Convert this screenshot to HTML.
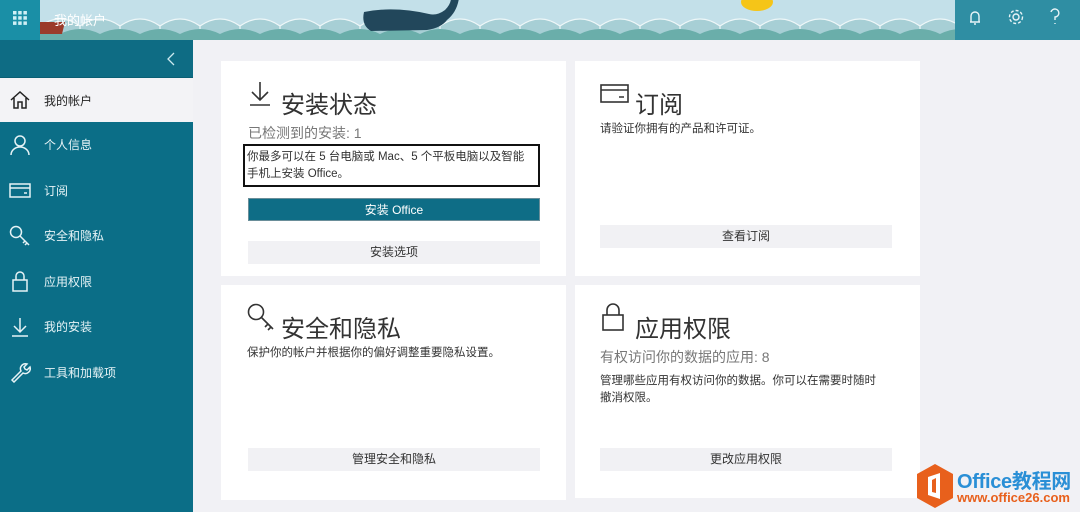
<!DOCTYPE html>
<html><head><meta charset="utf-8"><style>
*{margin:0;padding:0;box-sizing:border-box}
body{width:1080px;height:512px;overflow:hidden;background:#f1f1f5;font-family:"Liberation Sans","Noto Sans CJK SC",sans-serif;position:relative;color:#333}
.hdr{position:absolute;left:0;top:0;width:1080px;height:40px;background:#c3e0e9;overflow:hidden}
.waf{position:absolute;left:0;top:0;width:40px;height:40px;background:#1a8fa6}
.right{position:absolute;left:955px;top:0;width:125px;height:40px;background:#2f8ea3}
.side{position:absolute;left:0;top:40px;width:193px;height:472px;background:#0b6e87}
.topb{height:38px;background:#0e6c84;border-bottom:1px solid #0a5f74;position:relative}
.item{height:45.5px;display:flex;align-items:center;font-size:12px;color:#e6f3f6}
.item.sel{background:#f3f3f6;color:#222}
.item svg{margin-left:9px;width:22px;height:22px;margin-right:13px}
.card{position:absolute;background:#fff;width:345px;height:215px}
.t{position:absolute;left:60px;font-size:24px;color:#333}
.btn{position:absolute;left:27px;width:292px;height:23px;background:#f1f1f4;font-size:12px;text-align:center;line-height:23px;color:#333}
.p{position:absolute;left:26px;font-size:11.5px;line-height:17px;color:#333}
.sub{position:absolute;left:27px;font-size:14px;color:#777}
</style></head><body>
<div class="hdr">
<svg width="1080" height="40" style="position:absolute;left:0;top:0">
<defs><pattern id="w" x="0" y="0" width="40" height="40" patternUnits="userSpaceOnUse">
<path d="M0 26 q20 -14 40 0 V40 H0Z" fill="#a7cfd5" stroke="#eef7f8" stroke-width="1.2"/>
<path d="M-20 34 q20 -10 40 0 q20 -10 40 0 V40 H-20Z" fill="#6aaeaa"/>
</pattern></defs>
<rect x="40" y="0" width="1040" height="40" fill="url(#w)"/>
<path d="M364 12 q30-6 65 2 q8 2 16 -4 q6 -6 6 -12 l8 0 q-2 14 -12 22 q-6 8 -20 10 l-56 1 q-10-6 -7-19z" fill="#22475b"/>
<path d="M40 22 l25 0 l-3 12 l-22 0z" fill="#9b3b2a"/>
<ellipse cx="757" cy="2" rx="16" ry="9" fill="#f5c518"/>
</svg>
<div class="waf"><svg width="40" height="40"><g fill="#cfeff5"><rect x="13" y="11" width="3.5" height="3.5"/><rect x="18.2" y="11" width="3.5" height="3.5"/><rect x="23.4" y="11" width="3.5" height="3.5"/><rect x="13" y="16.2" width="3.5" height="3.5"/><rect x="18.2" y="16.2" width="3.5" height="3.5"/><rect x="23.4" y="16.2" width="3.5" height="3.5"/><rect x="13" y="21.4" width="3.5" height="3.5"/><rect x="18.2" y="21.4" width="3.5" height="3.5"/><rect x="23.4" y="21.4" width="3.5" height="3.5"/></g></svg></div>
<div style="position:absolute;left:54px;top:10px;font-size:13px;color:#fff">我的帐户</div>
<div class="right"><svg width="125" height="40" fill="none" stroke="#e8f4f7" stroke-width="1.4">
<path d="M16 22 v-6 a4 4 0 0 1 8 0 v6 h1 h-10z M19 24 h2"/>
<circle cx="61" cy="17" r="3"/><circle cx="61" cy="17" r="6.5" stroke-dasharray="3 2"/>
<path d="M96 12 a4 4 0 1 1 4 5 v3 M100 23 v1"/></svg></div>
</div>
<div class="side">
<div class="topb"><svg style="position:absolute;left:166px;top:12px" width="12" height="14"><path d="M8 1 L2 7 L8 13" stroke="#cbe9ef" stroke-width="1.3" fill="none"/></svg></div>
<div class="item sel" style="height:44px"><svg viewBox="0 0 22 22" fill="none" stroke="#222" stroke-width="1.5"><path d="M2 11 L11 3 L20 11 M5 9 V19 H9 V13 H13 V19 H17 V9"/></svg>我的帐户</div>
<div class="item"><svg viewBox="0 0 22 22" fill="none" stroke="#e6f3f6" stroke-width="1.5"><circle cx="11" cy="7" r="5"/><path d="M2 21 a9 8 0 0 1 18 0"/></svg>个人信息</div>
<div class="item"><svg viewBox="0 0 22 22" fill="none" stroke="#e6f3f6" stroke-width="1.5"><rect x="1" y="5" width="20" height="13"/><path d="M1 9 H21 M15 14 h3"/></svg>订阅</div>
<div class="item"><svg viewBox="0 0 22 22" fill="none" stroke="#e6f3f6" stroke-width="1.5"><circle cx="7" cy="7" r="5.5"/><path d="M11 11 L20 20 M16 16 l-2 2 M18 18 l-2 2"/></svg>安全和隐私</div>
<div class="item"><svg viewBox="0 0 22 22" fill="none" stroke="#e6f3f6" stroke-width="1.5"><rect x="4" y="10" width="14" height="11"/><path d="M7 10 V6 a4 4 0 0 1 8 0 V10"/></svg>应用权限</div>
<div class="item"><svg viewBox="0 0 22 22" fill="none" stroke="#e6f3f6" stroke-width="1.5"><path d="M11 2 V16 M5 10 L11 16 L17 10 M3 20 H19"/></svg>我的安装</div>
<div class="item"><svg viewBox="0 0 22 22" fill="none" stroke="#e6f3f6" stroke-width="1.5"><path d="M3 19 L12 10 a5 5 0 0 1 6-7 l-3 3 l1 2 l2 1 l3-3 a5 5 0 0 1 -7 6 L5 21z"/></svg>工具和加载项</div>
</div>

<div class="card" style="left:221px;top:61px">
<svg style="position:absolute;left:28px;top:20px" width="22" height="26" fill="none" stroke="#333" stroke-width="1.6"><path d="M11 1 V19 M3 11 L11 19 L19 11 M1 24 H21"/></svg>
<div class="t" style="top:24px">安装状态</div>
<div class="sub" style="top:62px">已检测到的安装: 1</div>
<div style="position:absolute;left:22px;top:83px;width:297px;height:43px;border:2px solid #111"></div>
<div class="p" style="top:88px">你最多可以在 5 台电脑或 Mac、5 个平板电脑以及智能<br>手机上安装 Office。</div>
<div class="btn" style="top:137px;background:#0e6d86;color:#fff;border:1px solid #6a8e99">安装 Office</div>
<div class="btn" style="top:180px">安装选项</div>
</div>

<div class="card" style="left:575px;top:61px">
<svg style="position:absolute;left:25px;top:23px" width="30" height="20" fill="none" stroke="#333" stroke-width="1.6"><rect x="1" y="1" width="27" height="17"/><path d="M1 6 H28 M19 13 h5"/></svg>
<div class="t" style="top:24px">订阅</div>
<div class="p" style="left:25px;top:60px">请验证你拥有的产品和许可证。</div>
<div class="btn" style="left:25px;top:164px">查看订阅</div>
</div>

<div class="card" style="left:221px;top:285px">
<svg style="position:absolute;left:26px;top:18px" width="28" height="28" fill="none" stroke="#333" stroke-width="1.6"><circle cx="9" cy="9" r="7.5"/><path d="M14 14 L26 26 M21 21 l-3 3 M24 24 l-3 3"/></svg>
<div class="t" style="top:24px">安全和隐私</div>
<div class="p" style="top:60px">保护你的帐户并根据你的偏好调整重要隐私设置。</div>
<div class="btn" style="top:163px">管理安全和隐私</div>
</div>

<div class="card" style="left:575px;top:285px;height:213px">
<svg style="position:absolute;left:26px;top:17px" width="24" height="30" fill="none" stroke="#333" stroke-width="1.6"><rect x="2" y="13" width="20" height="15"/><path d="M6 13 V8 a6 6 0 0 1 12 0 V13"/></svg>
<div class="t" style="top:24px">应用权限</div>
<div class="sub" style="left:25px;top:62px">有权访问你的数据的应用: 8</div>
<div class="p" style="left:25px;top:88px">管理哪些应用有权访问你的数据。你可以在需要时随时<br>撤消权限。</div>
<div class="btn" style="left:25px;top:163px">更改应用权限</div>
</div>

<svg style="position:absolute;left:915px;top:463px" width="40" height="46"><path d="M20 1 L38 11 V35 L20 45 L2 35 V11Z" fill="#e8601c"/><path d="M13 14 L25 10 V36 L13 32Z M17 17 V29 L21 30 V15Z" fill="#fff"/></svg>
<div style="position:absolute;left:957px;top:465px;font-size:20px;font-weight:bold;color:#2a8fd6;letter-spacing:-0.3px">Office教程网</div>
<div style="position:absolute;left:957px;top:490px;font-size:13px;font-weight:bold;color:#e8601c">www.office26.com</div>
</body></html>
